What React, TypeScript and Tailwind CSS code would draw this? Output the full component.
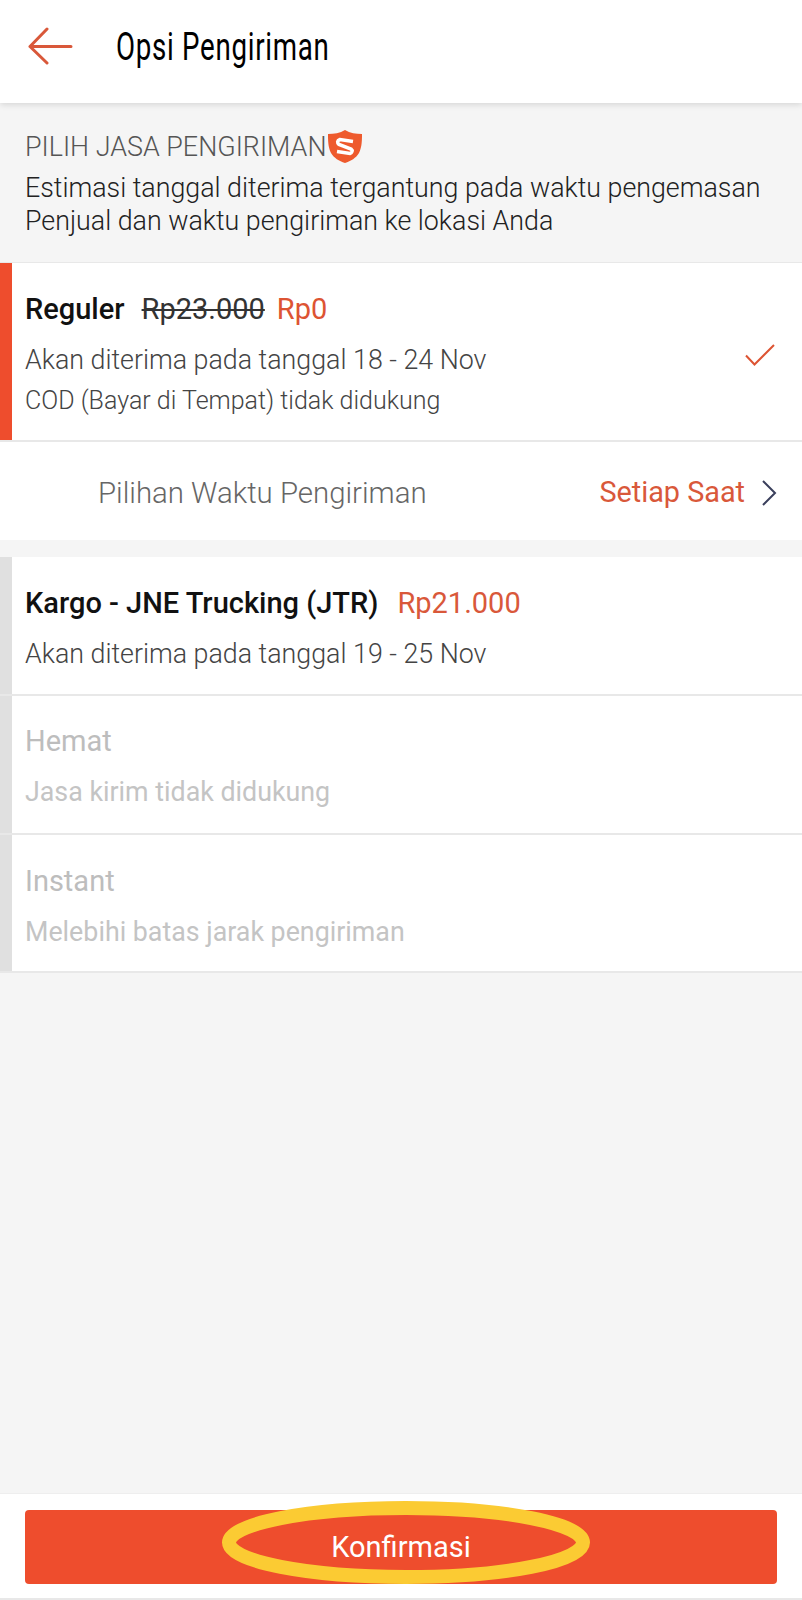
const font = { roboto: "font-['Roboto',sans-serif]" };

function ServiceRow({
  accent,
  children,
  className = "",
}: {
  accent: string;
  children: React.ReactNode;
  className?: string;
}) {
  return (
    <div className={`flex bg-white border-b-2 border-[#e8e8e8] ${className}`}>
      <div className={`w-3 shrink-0 ${accent}`} />
      <div className="flex-1 pl-[13px] pr-6">{children}</div>
    </div>
  );
}

export default function App() {
  return (
    <div className={`relative flex flex-col h-[1600px] w-[802px] overflow-hidden bg-[#f5f5f5] ${font.roboto}`}>
      <header className="relative z-10 flex h-[103px] items-start bg-white shadow-[0_2px_6px_rgba(0,0,0,0.12)]">
        <svg className="ml-[28px] mt-[27px]" width="45" height="38" viewBox="0 0 45 38" fill="none" stroke="#d9583a" strokeWidth="3" strokeLinecap="round" strokeLinejoin="round">
          <path d="M43 19.5H2M19 2 2 19.5 19 36" />
        </svg>
        <h1 className="ml-[43px] mt-[24px] text-[39px] leading-[46px] font-normal text-black tracking-[1px] scale-x-[0.71] origin-left whitespace-nowrap">
          Opsi Pengiriman
        </h1>
      </header>

      <section className="h-[159px] px-[25px] pt-[26px]">
        <div className="flex h-9 items-center">
          <span className="text-[26.900px] font-light leading-9 text-[#555]">PILIH JASA PENGIRIMAN</span>
          <svg className="ml-[2px] mt-[-2px]" width="34" height="33" viewBox="0 0 34 33">
            <path d="M17 0C22 3 28 4 34 4c0 6 0 13-3 19-3 5-8 8-14 10C11 31 6 28 3 23 0 17 0 10 0 4 6 4 12 3 17 0Z" fill="#ee5a2d" />
            <path d="M25 11.500 12 9.500c-3 1-3 3.500-1 5l12 4.500c2 1.500 1 4-1 4.500L9 21.500" fill="none" stroke="#fff" strokeWidth="3.500" />
          </svg>
        </div>
        <p className="mt-[7px] text-[26.800px] font-light leading-[32.500px] text-[#222] whitespace-nowrap">
          Estimasi tanggal diterima tergantung pada waktu pengemasan
          <br />
          Penjual dan waktu pengiriman ke lokasi Anda
        </p>
      </section>

      <div className="border-t-[1px] border-[#e8e8e8]" />

      <ServiceRow accent="bg-[#ee4d2d]" className="h-[179px]">
        <div className="flex justify-between">
          <div className="pt-[28px]">
            <div className="flex items-baseline text-[29px] leading-9">
              <span className="font-medium text-[#111]">Reguler</span>
              <span className="ml-[17px] text-[#333] line-through">Rp23.000</span>
              <span className="ml-[12px] text-[#dd5433]">Rp0</span>
            </div>
            <p className="mt-[15px] text-[26.800px] font-light leading-9 text-[#444]">Akan diterima pada tanggal 18 - 24 Nov</p>
            <p className="mt-[5px] text-[25px] font-light leading-9 text-[#444]">COD (Bayar di Tempat) tidak didukung</p>
          </div>
          <svg className="mt-[81px] mr-[3px]" width="30" height="22" viewBox="0 0 30 22" fill="none" stroke="#dd5433" strokeWidth="2">
            <path d="M1 11.500 9.500 20.500 29 1" />
          </svg>
        </div>
      </ServiceRow>

      <div className="flex h-[98px] items-center bg-white pt-[4px] pl-[98px] pr-[25px]">
        <span className="flex-1 text-[29.400px] text-[#666] font-light">Pilihan Waktu Pengiriman</span>
        <span className="text-[28.800px] font-normal text-[#d9583a]">Setiap Saat</span>
        <svg className="ml-[16px]" width="16" height="26" viewBox="0 0 16 26" fill="none" stroke="#3a3f5c" strokeWidth="2">
          <path d="M2 1 14 13 2 25" />
        </svg>
      </div>

      <div className="h-[17px]" />

      <ServiceRow accent="bg-[#e0e0e0]" className="h-[139px]">
        <div className="flex items-baseline pt-[28px] text-[29px] leading-9">
          <span className="font-medium text-[#111]">Kargo - JNE Trucking (JTR)</span>
          <span className="ml-[19px] text-[#d9583a]">Rp21.000</span>
        </div>
        <p className="mt-[15px] text-[26.800px] font-light leading-9 text-[#444]">Akan diterima pada tanggal 19 - 25 Nov</p>
      </ServiceRow>
      <ServiceRow accent="bg-[#e0e0e0]" className="h-[139px]">
        <p className="pt-[27px] text-[29px] leading-9 text-[#bdbdbd]">Hemat</p>
        <p className="mt-[15px] text-[26.800px] leading-9 text-[#c4c4c4]">Jasa kirim tidak didukung</p>
      </ServiceRow>
      <ServiceRow accent="bg-[#e0e0e0]" className="h-[138px]">
        <p className="pt-[28px] text-[29px] leading-9 text-[#bdbdbd]">Instant</p>
        <p className="mt-[15px] text-[26.800px] leading-9 text-[#c4c4c4]">Melebihi batas jarak pengiriman</p>
      </ServiceRow>

      <div className="flex-1" />

      <footer className="relative h-[105px] border-t border-[#eee] bg-white px-[25px] pt-[16px]">
        <button className="flex h-[74px] w-[752px] items-center justify-center rounded-[4px] bg-[#ee4d2d] pt-[2px] text-[29px] text-white">
          Konfirmasi
        </button>
        <svg className="absolute left-[222px] top-[7px]" width="368" height="83" viewBox="0 0 368 83" fill="none">
          <ellipse cx="184" cy="41.500" rx="177" ry="34.500" stroke="#fbcb33" strokeWidth="14" />
        </svg>
      </footer>
      <div className="h-[2px] bg-[#e8e8e8]" />
    </div>
  );
}
